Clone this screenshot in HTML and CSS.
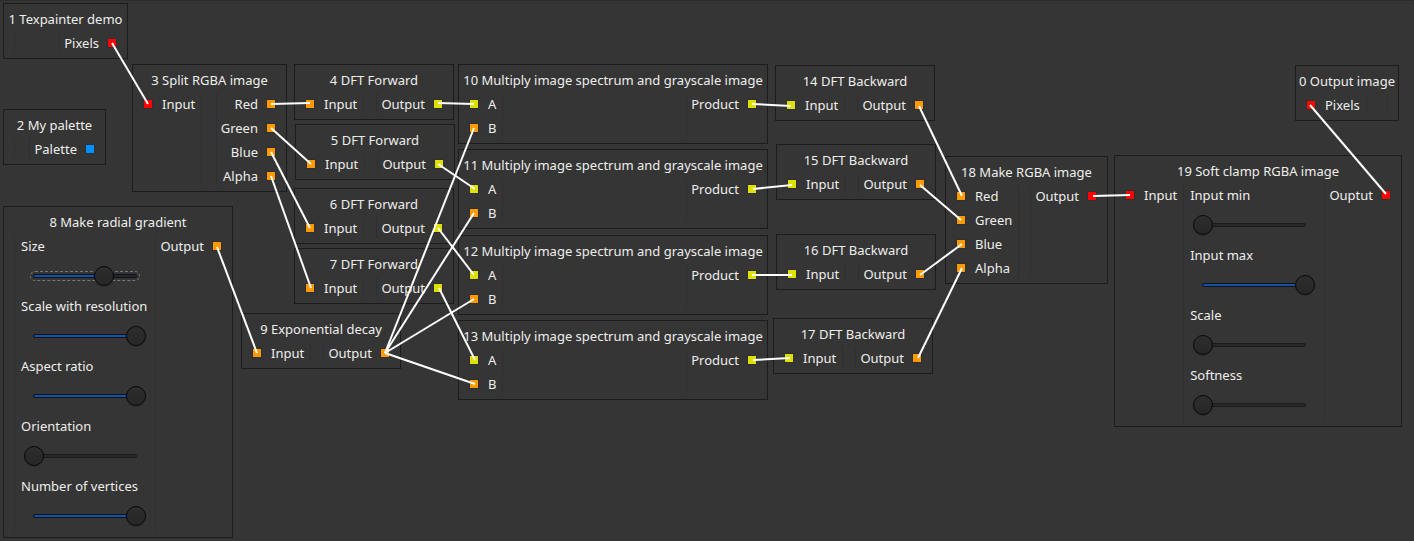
FILE: index.html
```html
<!DOCTYPE html>
<html lang="en">
<head>
<meta charset="utf-8">
<title>Texpainter</title>
<link rel="stylesheet" href="styles.css">
</head>
<body>
<main class="canvas" id="canvas"></main>
<script src="graph.js"></script>
</body>
</html>
```
FILE: styles.css
```css
*,
*::before,
*::after { box-sizing: border-box; }

body {
  margin: 0;
  background: #353535;
  color: #eeeeec;
  font: 13px/24px "Noto Sans", "Open Sans", sans-serif;
}

.canvas {
  position: relative;
  min-height: 100vh;
  overflow: hidden;
  border-top: 1px solid #2c2c2c;
}

.node {
  position: absolute;
  margin-top: -1px;
  padding: 3px 0;
  border: 1px solid #1c1c1c;
  white-space: nowrap;
}

.node-title {
  margin: 0;
  font-size: 13px;
  font-weight: 400;
  line-height: 24px;
  text-align: center;
}

.node-body {
  display: grid;
  grid-template-columns: auto 1fr auto;
}

.inputs,
.outputs { min-width: 10px; }

.params {
  margin: 1px 0 2px;
  border: solid #2f2f2f;
  border-width: 0 1px;
  padding: 0 5px;
}

.params.filled-in {
  margin: 0;
  padding: 0 6px;
}

.port {
  display: flex;
  align-items: center;
}

.inputs .port {
  gap: 10px;
  padding: 0 6px 0 11px;
}

.outputs .port {
  justify-content: flex-end;
  gap: 9px;
  padding: 0 11px 0 4px;
}

.pin {
  width: 8px;
  height: 8px;
  outline: 1px solid rgba(0, 0, 0, 0.1);
}

.red { background: #ff0000; }
.orange { background: #ff9900; }
.yellow { background: #e0e000; }
.blue { background: #0090ff; }

.param { display: block; }

.slider {
  display: grid;
  align-items: center;
  width: 122px;
  height: 36px;
  margin: 0 3px;
}

.slider::before {
  content: "";
  grid-area: 1 / 1;
  height: 4px;
  margin: 0 9px;
  border: 1px solid #1c1c1c;
  border-radius: 2px;
  background: linear-gradient(#1553a0, #1553a0) 0 0 / var(--value) 100% no-repeat #282828;
}

.slider.filled::before { border-color: #0a1220; }

.slider input {
  grid-area: 1 / 1;
  appearance: none;
  width: 100%;
  height: 20px;
  margin: 0;
  background: none;
  outline: none;
}

.slider input::-webkit-slider-thumb {
  appearance: none;
  box-sizing: border-box;
  width: 20px;
  height: 20px;
  border: 1px solid #070707;
  border-radius: 50%;
  background: linear-gradient(#2e2e2e, #262626);
  box-shadow: 0 1px 1px rgba(0, 0, 0, 0.15);
}

.slider.focused::after {
  content: "";
  grid-area: 1 / 1;
  height: 10px;
  margin: 0 6px;
  border: 1px dashed #777;
  border-radius: 5px;
}

.slider.focused input { z-index: 1; }

.wires {
  position: absolute;
  top: -1px;
  left: 0;
  width: 1414px;
  height: 541px;
  overflow: visible;
  pointer-events: none;
  fill: none;
  stroke: #fff;
  stroke-width: 2;
}
```
FILE: graph.js
```js
const input = ["Input", "orange"];
const forward = (id, x, y) => ({ id, title: "DFT Forward", x, y, w: 160, in: [input], out: [["Output", "yellow"]] });
const backward = (id, x, y) => ({ id, title: "DFT Backward", x, y, w: 160, in: [["Input", "yellow"]], out: [["Output", "orange"]] });
const multiply = (id, x, y) => ({
  id, title: "Multiply image spectrum and grayscale image", x, y, w: 310,
  in: [["A", "yellow"], ["B", "orange"]], out: [["Product", "yellow"]]
});
const channels = [["Red", "orange"], ["Green", "orange"], ["Blue", "orange"], ["Alpha", "orange"]];

const nodes = [
  { id: 1, title: "Texpainter demo", x: 3, y: 3, w: 125, out: [["Pixels", "red"]] },
  { id: 2, title: "My palette", x: 3, y: 109, w: 103, out: [["Palette", "blue"]] },
  { id: 3, title: "Split RGBA image", x: 132, y: 64, w: 155, in: [["Input", "red"]], out: channels },
  forward(4, 294, 64), forward(5, 295, 124), forward(6, 294, 188), forward(7, 294, 248),
  {
    id: 8, title: "Make radial gradient", x: 3, y: 206, w: 230, out: [["Output", "orange"]],
    params: [["Size", 69, true], ["Scale with resolution", 100], ["Aspect ratio", 100], ["Orientation", 0], ["Number of vertices", 100]]
  },
  { id: 9, title: "Exponential decay", x: 241, y: 313, w: 160, in: [input], out: [["Output", "orange"]] },
  multiply(10, 458, 64), multiply(11, 458, 149), multiply(12, 458, 235), multiply(13, 458, 320),
  backward(14, 775, 65), backward(15, 776, 144), backward(16, 776, 234), backward(17, 773, 318),
  { id: 18, title: "Make RGBA image", x: 945, y: 156, w: 163, in: channels, out: [["Output", "red"]] },
  {
    id: 19, title: "Soft clamp RGBA image", x: 1114, y: 155, w: 288, in: [["Input", "red"]], out: [["Ouptut", "red"]],
    params: [["Input min", 0], ["Input max", 100], ["Scale", 0], ["Softness", 0]]
  },
  { id: 0, title: "Output image", x: 1295, y: 65, w: 104, in: [["Pixels", "red"]] }
];

const wires = [
  [112, 43, 148, 104], [271, 104, 310, 103], [271, 128, 311, 164], [271, 152, 310, 228], [271, 176, 311, 288],
  [438, 103, 474, 104], [438, 164, 475, 189], [438, 228, 474, 275], [439, 288, 475, 360], [217, 247, 257, 353],
  [385, 353, 474, 128], [385, 353, 474, 213], [385, 353, 474, 299], [385, 353, 475, 384],
  [752, 104, 791, 106], [753, 189, 792, 185], [752, 275, 792, 275], [753, 360, 790, 358],
  [919, 106, 962, 196], [920, 185, 961, 220], [920, 275, 962, 244], [918, 358, 962, 268],
  [1093, 196, 1130, 195], [1386, 194, 1310, 105]
];

const pin = color => `<span class="pin ${color}"></span>`;
const inPort = ([name, color]) => `<div class="port">${pin(color)}<span>${name}</span></div>`;
const outPort = ([name, color]) => `<div class="port"><span>${name}</span>${pin(color)}</div>`;
const param = (node, [name, value, focused], i) => {
  const id = `p${node.id}-${i}`;
  return `<label class="param" for="${id}">${name}</label>
    <div class="slider${value ? " filled" : ""}${focused ? " focused" : ""}" style="--value:${value}%">
      <input type="range" id="${id}" min="0" max="100" value="${value}">
    </div>`;
};

document.getElementById("canvas").innerHTML = nodes.map(n => `
  <section class="node" style="left:${n.x}px;top:${n.y}px;min-width:${n.w}px">
    <h2 class="node-title">${n.id} ${n.title}</h2>
    <div class="node-body">
      <div class="inputs">${(n.in || []).map(inPort).join("")}</div>
      <div class="params${n.params ? " filled-in" : ""}">${(n.params || []).map((p, i) => param(n, p, i)).join("")}</div>
      <div class="outputs">${(n.out || []).map(outPort).join("")}</div>
    </div>
  </section>`).join("") +
  `<svg class="wires" aria-hidden="true">${wires.map(([a, b, c, d]) => `<path d="M${a} ${b}L${c} ${d}"/>`).join("")}</svg>`;
```
